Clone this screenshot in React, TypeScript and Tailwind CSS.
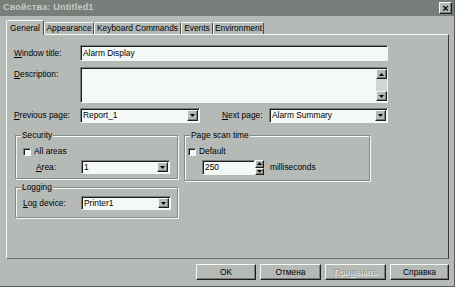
import React from "react";

const FONT = "font-['Liberation_Sans',Arial,sans-serif]";
const sunken =
  "border border-t-[#7b7f7b] border-l-[#7b7f7b] border-b-[#f4f8f4] border-r-[#f4f8f4] shadow-[inset_1px_1px_0_#1c1e1c] bg-[#f5f9f5]";
const raised =
  "border border-t-[#f4f8f4] border-l-[#f4f8f4] border-b-[#1c1e1c] border-r-[#1c1e1c] shadow-[inset_-1px_-1px_0_#7b7f7b] bg-[#b6bab6]";

function Arrow({ up }: { up?: boolean }) {
  return (
    <svg width="5" height="3" viewBox="0 0 5 3">
      <polygon points={up ? "2.5,0 5,3 0,3" : "0,0 5,0 2.5,3"} fill="#000" />
    </svg>
  );
}

function Select({ value, w, h = 15 }: { value: string; w: string; h?: number }) {
  return (
    <div className={`${sunken} ${w} flex items-stretch`} style={{ height: h }}>
      <span className="flex-1 pl-[2px] flex items-center leading-none">{value}</span>
      <div className={`${raised} w-[11px] my-[1px] mr-[1px] flex items-center justify-center`}>
        <Arrow />
      </div>
    </div>
  );
}

function Check({ label }: { label: string }) {
  return (
    <div className="flex items-center gap-[3px] h-[9px]">
      <div className={`${sunken} w-[8px] h-[8px]`} />
      <span className="leading-none">{label}</span>
    </div>
  );
}

function Group({ title, className, children }: { title: string; className: string; children: React.ReactNode }) {
  return (
    <div className={`relative border border-[#878b87] shadow-[inset_1px_1px_0_#f4f8f4,1px_1px_0_#f4f8f4] ${className}`}>
      <span className="absolute -top-[6px] left-[5px] px-[1px] bg-[#b6bab6] leading-[11px]">{title}</span>
      {children}
    </div>
  );
}

function Label({ first, rest, w }: { first: string; rest: string; w: string }) {
  return (
    <span className={`${w} leading-none shrink-0`}>
      <span className="underline underline-offset-1">{first}</span>
      {rest}
    </span>
  );
}

const tabs = [
  { name: "General", w: "w-[38px]" },
  { name: "Appearance", w: "w-[50px]" },
  { name: "Keyboard Commands", w: "w-[87px]" },
  { name: "Events", w: "w-[32px]" },
  { name: "Environment", w: "w-[51px]" },
];

export default function App() {
  return (
    <div className={`${FONT} text-[8.4px] text-black w-[455px] h-[287px] bg-[#b6bab6] flex flex-col border-r border-b border-[#5a5e5a] overflow-hidden`}>
      {/* title bar */}
      <div className="h-[16px] bg-[#7a7e7a] flex items-center justify-between pl-[3px] pr-[2px]">
        <span className="font-bold text-[#c6cac6] text-[9px] tracking-[0.2px]">Свойства: Untitled1</span>
        <div className={`${raised} w-[13px] h-[12px] flex items-center justify-center text-[11px] font-bold leading-none`}>
          ×
        </div>
      </div>

      <div className="pl-[6px] pt-[4px]">
        {/* tabs */}
        <div className="flex items-end h-[14px]">
          {tabs.map((t, i) => (
            <div
              key={t.name}
              className={`${t.w} flex items-center justify-center border-t border-l border-r border-t-[#f4f8f4] border-l-[#f4f8f4] border-r-[#4a4e4a] rounded-t-[2px] ${
                i === 0 ? "h-[15px] -mb-[1px] relative z-10 bg-[#b6bab6]" : "h-[12px]"
              }`}
            >
              <span className="leading-none">{t.name}</span>
            </div>
          ))}
        </div>

        {/* panel */}
        <div className="w-[443px] h-[225px] border border-t-[#f4f8f4] border-l-[#f4f8f4] border-r-[#3a3e3a] border-b-[#6a6e6a] pl-[7px] pt-[10px]">
          <div className="flex items-center h-[16px]">
            <Label first="W" rest="indow title:" w="w-[66px]" />
            <div className={`${sunken} w-[308px] h-[16px] pl-[2px] flex items-center leading-none`}>Alarm Display</div>
          </div>

          <div className="flex items-start mt-[6px]">
            <span className="w-[66px] pt-[3px] leading-none">
              <span className="underline underline-offset-1">D</span>escription:
            </span>
            <div className={`${sunken} w-[308px] h-[36px] flex justify-end`}>
              <div className="w-[11px] mt-[1px] mb-[1px] flex flex-col bg-[#d2d6d2]">
                <div className={`${raised} h-[10px] flex items-center justify-center`}>
                  <Arrow up />
                </div>
                <div className="flex-1" />
                <div className={`${raised} h-[10px] flex items-center justify-center`}>
                  <Arrow />
                </div>
              </div>
            </div>
          </div>

          <div className="flex items-center mt-[5px] h-[15px]">
            <Label first="P" rest="revious page:" w="w-[66px]" />
            <Select value="Report_1" w="w-[120px]" />
            <span className="ml-[22px] w-[47px] leading-none">
              <span className="underline underline-offset-1">N</span>ext page:
            </span>
            <Select value="Alarm Summary" w="w-[119px]" />
          </div>

          <div className="flex items-start gap-[6px] mt-[12px] pl-[1px]">
            <div className="flex flex-col gap-[8px]">
              <Group title="Security" className="w-[163px] h-[44px] pt-[11px] pl-[7px]">
                <Check label="All areas" />
                <div className="flex items-center mt-[4px] pl-[13px]">
                  <Label first="A" rest="rea:" w="w-[45px]" />
                  <Select value="1" w="w-[89px]" h={14} />
                </div>
              </Group>
              <Group title="Logging" className="w-[163px] h-[31px] pt-[8px] pl-[7px]">
                <div className="flex items-center">
                  <Label first="L" rest="og device:" w="w-[58px]" />
                  <Select value="Printer1" w="w-[90px]" h={14} />
                </div>
              </Group>
            </div>

            <Group title="Page scan time" className="w-[186px] h-[46px] pt-[11px] pl-[3px]">
              <Check label="Default" />
              <div className="flex items-center mt-[4px] pl-[14px]">
                <div className={`${sunken} w-[53px] h-[15px] pl-[2px] flex items-center leading-none`}>250</div>
                <div className="w-[9px] h-[15px] flex flex-col">
                  <div className={`${raised} flex-1 flex items-center justify-center`}>
                    <Arrow up />
                  </div>
                  <div className={`${raised} flex-1 flex items-center justify-center`}>
                    <Arrow />
                  </div>
                </div>
                <span className="ml-[6px] leading-none">milliseconds</span>
              </div>
            </Group>
          </div>
        </div>

        {/* buttons */}
        <div className="flex justify-end gap-[4px] w-[443px] mt-[5px]">
          <button className={`${raised} w-[60px] h-[16px] leading-none`}>OK</button>
          <button className={`${raised} w-[61px] h-[16px] leading-none`}>Отмена</button>
          <button className={`${raised} w-[61px] h-[16px] leading-none text-[#8d918d] [text-shadow:1px_1px_0_#f4f8f4]`}>
            При<span className="underline">м</span>енить
          </button>
          <button className={`${raised} w-[59px] h-[16px] leading-none`}>Справка</button>
        </div>
      </div>
    </div>
  );
}
